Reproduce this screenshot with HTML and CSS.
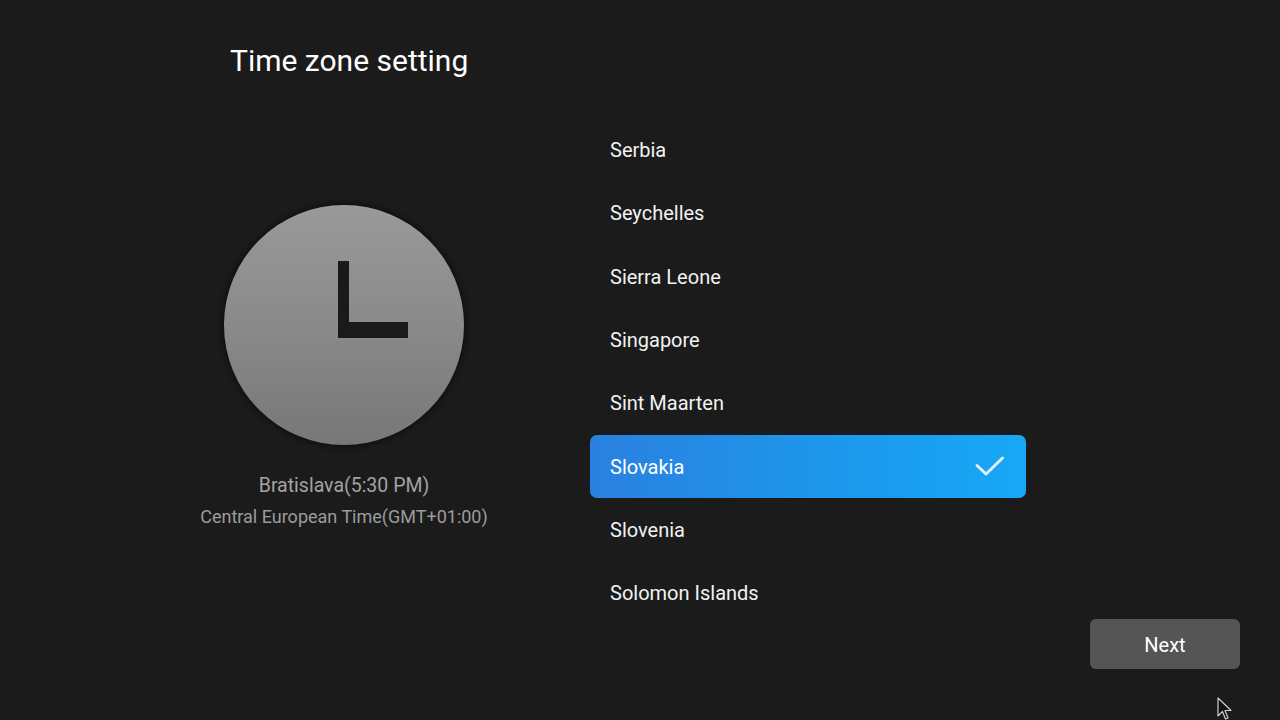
FILE: index.html
```html
<!DOCTYPE html>
<html lang="en">
<head>
<meta charset="utf-8">
<title>Time zone setting</title>
<link rel="stylesheet" href="styles.css">
</head>
<body>
<div class="page">
  <section class="left">
    <h1 class="title">Time zone setting</h1>
    <div class="clock-block">
      <div class="clock">
        <svg class="hands" width="240" height="240" viewBox="0 0 240 240">
          <path d="M114 56 H125 V117 H184 V133 H114 Z" fill="#1a1a1a"/>
        </svg>
      </div>
      <div class="city">Bratislava(5:30 PM)</div>
      <div class="zone">Central European Time(GMT+01:00)</div>
    </div>
  </section>
  <ul class="list">
    <li class="item">Serbia</li>
    <li class="item">Seychelles</li>
    <li class="item">Sierra Leone</li>
    <li class="item">Singapore</li>
    <li class="item">Sint Maarten</li>
    <li class="item selected"><span>Slovakia</span>
      <svg class="check" width="30" height="22" viewBox="0 0 30 22"><path d="M2 9.5 L11 18 L27.5 2" fill="none" stroke="#e4eef8" stroke-width="3" stroke-linecap="round" stroke-linejoin="round"/></svg>
    </li>
    <li class="item">Slovenia</li>
    <li class="item">Solomon Islands</li>
  </ul>
  <section class="right">
    <button class="next">Next</button>
  </section>
</div>
<svg class="cursor" width="16" height="24" viewBox="0 0 16 24"><path d="M1 1 V19 L5.5 14.5 L8.5 22 L11 21 L8 13.5 H14 Z" fill="#111" stroke="#cfcfcf" stroke-width="1.2" stroke-linejoin="round"/></svg>
</body>
</html>
```
FILE: styles.css
```css
html, body {
  margin: 0;
  padding: 0;
}
body {
  width: 1280px;
  height: 720px;
  background: #1b1b1b;
  font-family: Roboto, "Noto Sans", sans-serif;
  overflow: hidden;
  position: relative;
}
.page {
  display: grid;
  grid-template-columns: 590px 436px 1fr;
  height: 720px;
}
.left {
  display: flex;
  flex-direction: column;
}
.title {
  margin: 0;
  padding: 43px 0 0 230px;
  font-size: 30px;
  line-height: 36px;
  font-weight: 400;
  color: #ffffff;
}
.clock-block {
  margin-left: 144px;
  width: 400px;
  display: flex;
  flex-direction: column;
  align-items: center;
  margin-top: 126px;
}
.clock {
  width: 240px;
  height: 240px;
  border-radius: 50%;
  background: linear-gradient(180deg, #999999 0%, #8a8a8a 50%, #777777 100%);
  box-shadow: 0 0 6px 2px rgba(0, 0, 0, 0.45);
}
.hands {
  display: block;
}
.city {
  margin-top: 29px;
  font-size: 19.5px;
  line-height: 24px;
  color: #a3a3a3;
}
.zone {
  margin-top: 7px;
  font-size: 18px;
  line-height: 24px;
  color: #9c9c9c;
}
.list {
  list-style: none;
  margin: 0;
  padding: 118px 0 0 0;
}
.item {
  height: 63.33px;
  display: flex;
  align-items: center;
  justify-content: space-between;
  padding: 1px 21px 0 20px;
  box-sizing: border-box;
  font-size: 20px;
  color: #f2f2f2;
}
.item.selected {
  background: linear-gradient(90deg, #2a80e0 0%, #1e95ea 50%, #17a8f6 100%);
  border-radius: 7px;
  color: #ffffff;
}
.check {
  display: block;
}
.right {
  display: flex;
  align-items: flex-end;
  justify-content: flex-end;
  padding: 0 40px 51px 0;
}
.next {
  width: 150px;
  height: 50px;
  border: none;
  border-radius: 6px;
  background: #555555;
  color: #ffffff;
  font-family: Roboto, "Noto Sans", sans-serif;
  font-size: 20px;
  padding: 0;
  line-height: 52px;
}
.cursor {
  position: absolute;
  left: 1217px;
  top: 697px;
}
```
